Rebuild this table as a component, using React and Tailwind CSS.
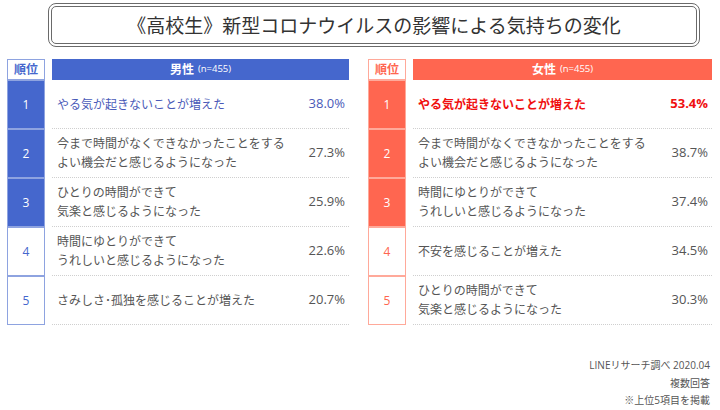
import React from "react";

const FONT = { fontFamily: '"Open Sans", "Noto Sans CJK JP", sans-serif' };

const male = [
  { t: ["やる気が起きないことが増えた"], p: "38.0%" },
  { t: ["今まで時間がなくできなかったことをする", "よい機会だと感じるようになった"], p: "27.3%" },
  { t: ["ひとりの時間ができて", "気楽と感じるようになった"], p: "25.9%" },
  { t: ["時間にゆとりができて", "うれしいと感じるようになった"], p: "22.6%" },
  { t: ["さみしさ･孤独を感じることが増えた"], p: "20.7%" },
];
const female = [
  { t: ["やる気が起きないことが増えた"], p: "53.4%" },
  { t: ["今まで時間がなくできなかったことをする", "よい機会だと感じるようになった"], p: "38.7%" },
  { t: ["時間にゆとりができて", "うれしいと感じるようになった"], p: "37.4%" },
  { t: ["不安を感じることが増えた"], p: "34.5%" },
  { t: ["ひとりの時間ができて", "気楽と感じるようになった"], p: "30.3%" },
];

function Table({ data, label, blue }) {
  const fill = blue ? "bg-[#4567cd]" : "bg-[#ff6650]";
  const border = blue ? "border-[#8ea3e0]" : "border-[#ffa99a]";
  const rankText = blue ? "text-[#4567cd]" : "text-[#ff6650]";
  const first = blue ? "text-[#4a5ab8]" : "text-[#f01010] font-bold";
  return (
    <div className="flex flex-col">
      <div className="flex gap-[7px] h-[21px]">
        <div className={`w-[38px] h-[21px] border ${border} bg-white flex items-center justify-center text-[12px] font-bold ${rankText}`}>
          順位
        </div>
        <div className={`flex-1 ${fill} flex items-center justify-center text-white`}>
          <span className="text-[12px] font-bold">{label}</span>
          <span className="text-[9.5px] ml-[4px]">(n=455)</span>
        </div>
      </div>
      {data.map((r, i) => (
        <div key={i} className="flex gap-[7px] h-[49px]">
          <div
            className={`w-[38px] h-[49px] border ${border} flex items-center justify-center text-[12px] ${
              i < 3 ? `${fill} text-white` : `bg-white ${rankText}`
            }`}
          >
            {i + 1}
          </div>
          <div className="flex-1 flex items-center justify-between pl-[5px] pr-[4px] border-b border-dotted border-[#cfcfcf]">
            <div className={`text-[12px] leading-[19px] ${i === 0 ? first : "text-[#555]"}`}>
              {r.t.map((l, j) => (
                <div key={j}>{l}</div>
              ))}
            </div>
            <div className={`text-[13px] ${i === 0 ? first : "text-[#555]"}`}>{r.p}</div>
          </div>
        </div>
      ))}
    </div>
  );
}

export default function App() {
  return (
    <div className="w-[720px] h-[410px] bg-white overflow-hidden" style={FONT}>
      <div className="pt-[3px] pl-[48px]">
        <div
          className="w-[652px] h-[44px] border-[4px] border-double border-[#6a6a6a] rounded-[8px] flex items-center justify-center text-[19px] text-[#333]"
          style={{ fontFamily: '"Noto Sans CJK JP", sans-serif' }}
        >
          《高校生》新型コロナウイルスの影響による気持ちの変化
        </div>
      </div>
      <div className="flex pl-[7px] pt-[12px] gap-[19px]">
        <div className="w-[342px]">
          <Table data={male} label="男性" blue />
        </div>
        <div className="w-[344px]">
          <Table data={female} label="女性" />
        </div>
      </div>
      <div className="pr-[10px] pt-[32px] text-right text-[10px] leading-[17.5px] text-[#555]">
        <div>LINEリサーチ調べ 2020.04</div>
        <div>複数回答</div>
        <div>※上位5項目を掲載</div>
      </div>
    </div>
  );
}
